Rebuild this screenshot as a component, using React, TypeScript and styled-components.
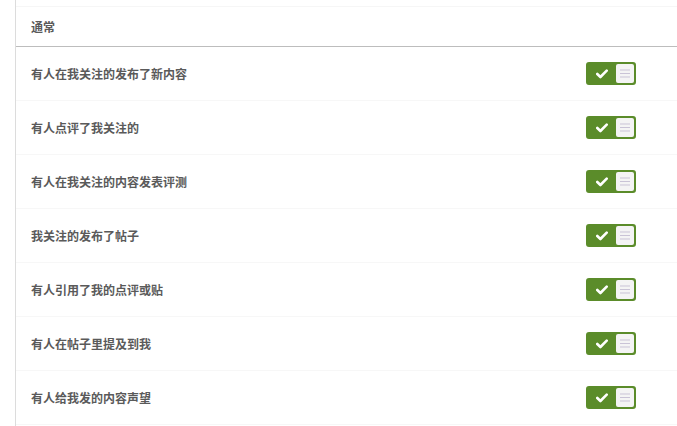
import React from "react";
import styled, { createGlobalStyle } from "styled-components";

const GlobalStyle = createGlobalStyle`
  html, body {
    margin: 0;
    padding: 0;
    background: #fff;
  }
  body {
    font-family: "Microsoft YaHei", "Noto Sans CJK SC", "Liberation Sans", sans-serif;
  }
`;

const Page = styled.div`
  width: 677px;
  height: 426px;
  overflow: hidden;
  padding-left: 15px;
  box-sizing: border-box;
`;

const Panel = styled.div`
  border-left: 1px solid #dcdcdc;
  height: 100%;
`;

const TopStrip = styled.div`
  height: 6px;
  border-bottom: 1px solid #f6f6f6;
`;

const Header = styled.div`
  height: 39px;
  display: flex;
  align-items: center;
  padding-left: 15px;
  border-bottom: 1px solid #bdbdbd;
  font-size: 12px;
  font-weight: bold;
  color: #5a5a5a;
`;

const Row = styled.div`
  height: 53px;
  display: flex;
  align-items: center;
  justify-content: space-between;
  padding: 0 41px 0 15px;
  border-bottom: 1px solid #f7f7f7;
`;

const Label = styled.span`
  font-size: 12px;
  font-weight: bold;
  color: #5a5a5a;
`;

const Toggle = styled.div`
  width: 50px;
  height: 23px;
  box-sizing: border-box;
  border-radius: 3px;
  background: #5b8c2a;
  border: 2px solid #5b8c2a;
  display: flex;
  align-items: stretch;
`;

const OnSide = styled.div`
  flex: 1;
  display: flex;
  align-items: center;
  justify-content: center;
`;

const Knob = styled.div`
  width: 18px;
  border-radius: 2px;
  background: #f4f4f4;
  display: flex;
  align-items: center;
  justify-content: center;
`;

const Check = () => (
  <svg width="12" height="10" viewBox="0 0 12 10">
    <path d="M1.3 5 L4.4 8 L10.7 1.6" fill="none" stroke="#fff" strokeWidth="2.6" strokeLinecap="round" strokeLinejoin="round" />
  </svg>
);

const Bars = () => (
  <svg width="10" height="9" viewBox="0 0 10 9">
    <path d="M0 1h10M0 4.5h10M0 8h10" stroke="#c9c3d6" strokeWidth="1" />
  </svg>
);

const ITEMS = [
  "有人在我关注的发布了新内容",
  "有人点评了我关注的",
  "有人在我关注的内容发表评测",
  "我关注的发布了帖子",
  "有人引用了我的点评或贴",
  "有人在帖子里提及到我",
  "有人给我发的内容声望",
];

function App() {
  return (
    <Page>
      <GlobalStyle />
      <Panel>
        <TopStrip />
        <Header>通常</Header>
        {ITEMS.map((t) => (
          <Row key={t}>
            <Label>{t}</Label>
            <Toggle>
              <OnSide>
                <Check />
              </OnSide>
              <Knob>
                <Bars />
              </Knob>
            </Toggle>
          </Row>
        ))}
      </Panel>
    </Page>
  );
}

export default App;
